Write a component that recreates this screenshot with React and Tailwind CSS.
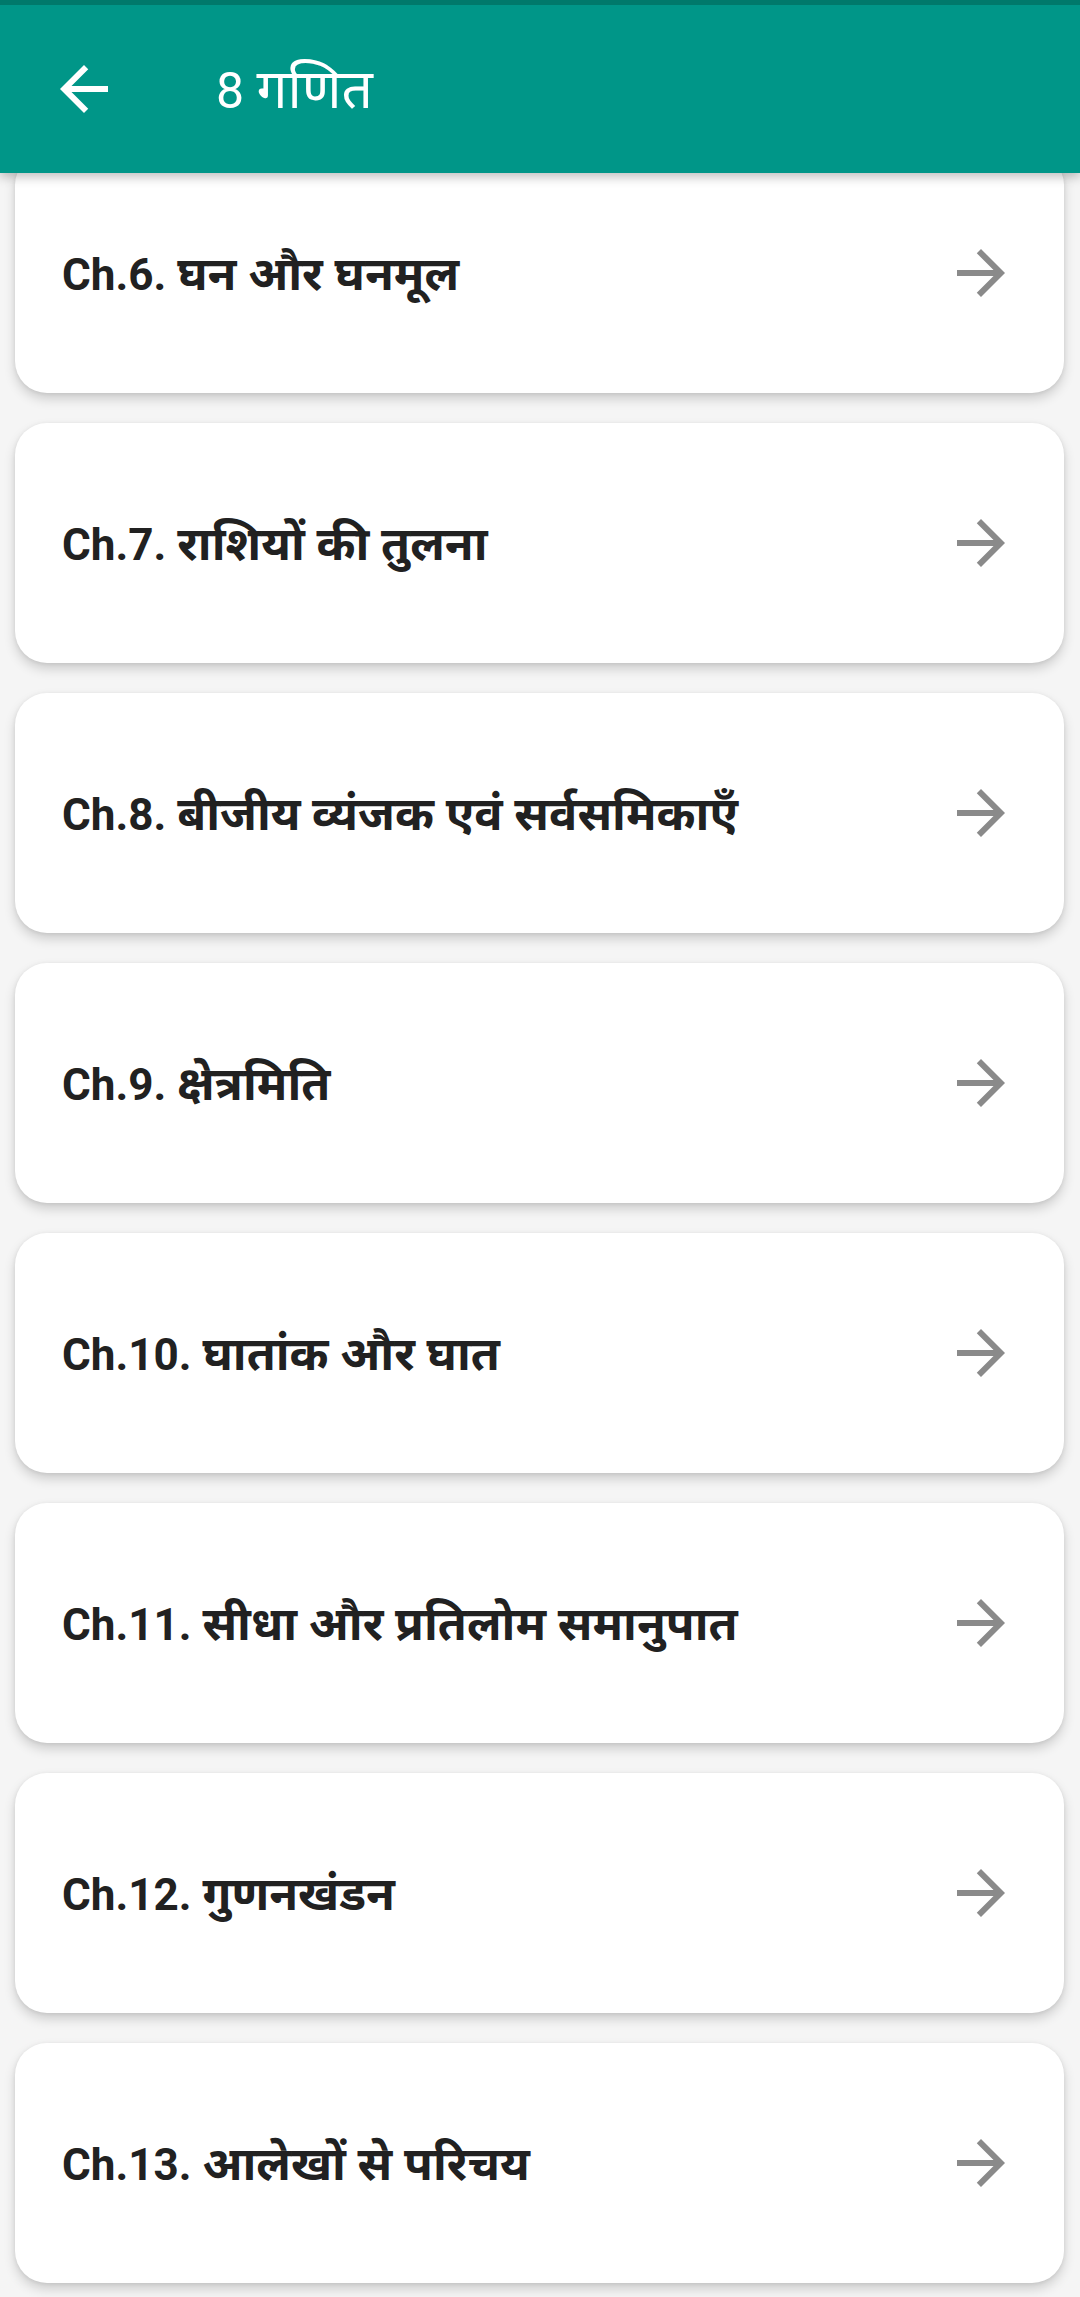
const chapters = [
  ["Ch.6.", "घन और घनमूल"],
  ["Ch.7.", "राशियों की तुलना"],
  ["Ch.8.", "बीजीय व्यंजक एवं सर्वसमिकाएँ"],
  ["Ch.9.", "क्षेत्रमिति"],
  ["Ch.10.", "घातांक और घात"],
  ["Ch.11.", "सीधा और प्रतिलोम समानुपात"],
  ["Ch.12.", "गुणनखंडन"],
  ["Ch.13.", "आलेखों से परिचय"],
];

const font = { fontFamily: '"Roboto", "Noto Sans", "Noto Sans Devanagari", sans-serif' };

function ArrowBack() {
  return (
    <svg viewBox="0 0 24 24" className="w-[72px] h-[72px] fill-white">
      <path d="M20 11H7.83l5.59-5.59L12 4l-8 8 8 8 1.41-1.41L7.83 13H20v-2z" />
    </svg>
  );
}

function ArrowForward() {
  return (
    <svg viewBox="0 0 24 24" className="w-[72px] h-[72px] fill-[#8a8a8a]">
      <path d="M12 4l-1.41 1.41L16.17 11H4v2h12.17l-5.58 5.59L12 20l8-8z" />
    </svg>
  );
}

function ChapterCard({ num, title }) {
  return (
    <div className="ml-[15px] mr-[16px] h-[240px] bg-white rounded-[32px] shadow-[0_6px_12px_rgba(0,0,0,0.16),0_1px_4px_rgba(0,0,0,0.08)] flex items-center justify-between pl-[47px] pr-[47px]">
      <span className="text-[44px] font-bold text-[#212121] leading-none">
        {num} <span className="text-[47px]">{title}</span>
      </span>
      <ArrowForward />
    </div>
  );
}

export default function App() {
  return (
    <div className="w-[1080px] h-[2297px] overflow-hidden bg-[#f5f5f5] flex flex-col" style={font}>
      <header className="relative z-10 h-[173px] shrink-0 bg-[#009688] border-t-[5px] border-[#00796b] shadow-[0_4px_10px_rgba(0,0,0,0.25)] flex items-center">
        <div className="ml-[48px]">
          <ArrowBack />
        </div>
        <h1 className="ml-[96px] text-[50px] text-white font-normal leading-none">
          8 <span className="text-[55px]">गणित</span>
        </h1>
      </header>
      <main className="relative z-0 -mt-[20px] flex flex-col gap-[30px]">
        {chapters.map(([num, title]) => (
          <ChapterCard key={num} num={num} title={title} />
        ))}
      </main>
    </div>
  );
}
